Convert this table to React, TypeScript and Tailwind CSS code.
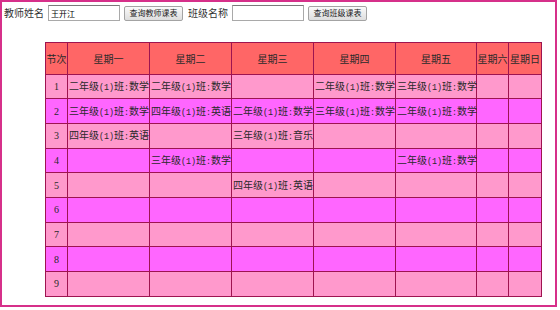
const days = ['星期一', '星期二', '星期三', '星期四', '星期五', '星期六', '星期日']

// 9 periods x 7 days
const schedule: string[][] = [
  ['二年级(1)班:数学', '二年级(1)班:数学', '', '二年级(1)班:数学', '三年级(1)班:数学', '', ''],
  ['三年级(1)班:数学', '四年级(1)班:英语', '二年级(1)班:数学', '三年级(1)班:数学', '二年级(1)班:数学', '', ''],
  ['四年级(1)班:英语', '', '三年级(1)班:音乐', '', '', '', ''],
  ['', '三年级(1)班:数学', '', '', '二年级(1)班:数学', '', ''],
  ['', '', '四年级(1)班:英语', '', '', '', ''],
  ['', '', '', '', '', '', ''],
  ['', '', '', '', '', '', ''],
  ['', '', '', '', '', '', ''],
  ['', '', '', '', '', '', ''],
]

const colWidths = ['w-[22px]', 'w-[82px]', 'w-[82px]', 'w-[82px]', 'w-[82px]', 'w-[81px]', 'w-[32px]', 'w-[33px]']

// half-width chars are rendered in a mono face so they take half a CJK cell
function Mixed({ text }: { text: string }) {
  const parts = text.split(/([\x20-\x7e]+)/).filter(Boolean)
  return (
    <>
      {parts.map((p, i) =>
        /^[\x20-\x7e]+$/.test(p) ? (
          <span key={i} className="font-['Liberation_Mono',monospace] text-[8.33px]">
            {p}
          </span>
        ) : (
          <span key={i}>{p}</span>
        ),
      )}
    </>
  )
}

function SearchField({ label, value, button }: { label: string; value: string; button: string }) {
  return (
    <div className="flex items-center gap-[4px]">
      <span className="text-[10px] leading-none text-[#333]">{label}</span>
      <input
        readOnly
        value={value}
        className="h-[16px] w-[72px] border border-[#a9a9a9] border-t-[#7a7a7a] bg-white px-[2px] text-[8px] text-black outline-none"
      />
      <button className="flex h-[15px] w-[59px] items-center justify-center rounded-[2px] border border-[#a3a3a3] bg-gradient-to-b from-[#fafafa] to-[#dedede] text-[8px] leading-none text-[#222]">
        {button}
      </button>
    </div>
  )
}

export default function App() {
  return (
    <div className="h-[310px] w-[560px] bg-white font-['Noto_Sans_CJK_SC','Noto_Sans',sans-serif]">
      <div className="h-[307px] w-[557px] border-2 border-[#d6308a] pl-[2px] pt-[3px]">
        <div className="flex items-center gap-[5px]">
          <SearchField label="教师姓名" value="王开江" button="查询教师课表" />
          <SearchField label="班级名称" value="" button="查询班级课表" />
        </div>

        <table className="ml-[41px] mt-[21px] w-[496px] table-fixed border-collapse text-[10px] text-[#2a2a2a]">
          <colgroup>
            {colWidths.map((w, i) => (
              <col key={i} className={w} />
            ))}
          </colgroup>
          <thead>
            <tr className="h-[31.5px] bg-[#ff6666]">
              <th className="border border-[#9e1450] p-0 text-center font-normal">节次</th>
              {days.map((d) => (
                <th key={d} className="border border-[#9e1450] p-0 text-center font-normal whitespace-nowrap">
                  {d}
                </th>
              ))}
            </tr>
          </thead>
          <tbody>
            {schedule.map((row, i) => (
              <tr key={i} className={i % 2 === 0 ? 'h-[24.7px] bg-[#ff99cc]' : 'h-[24.7px] bg-[#ff66ff]'}>
                <td className="border border-[#9e1450] p-0 text-center font-['Liberation_Serif',serif] text-[10px]">
                  {i + 1}
                </td>
                {row.map((c, j) => (
                  <td key={j} className="border border-[#9e1450] p-0 pl-[1px] text-left whitespace-nowrap">
                    <Mixed text={c} />
                  </td>
                ))}
              </tr>
            ))}
          </tbody>
        </table>
      </div>
    </div>
  )
}
